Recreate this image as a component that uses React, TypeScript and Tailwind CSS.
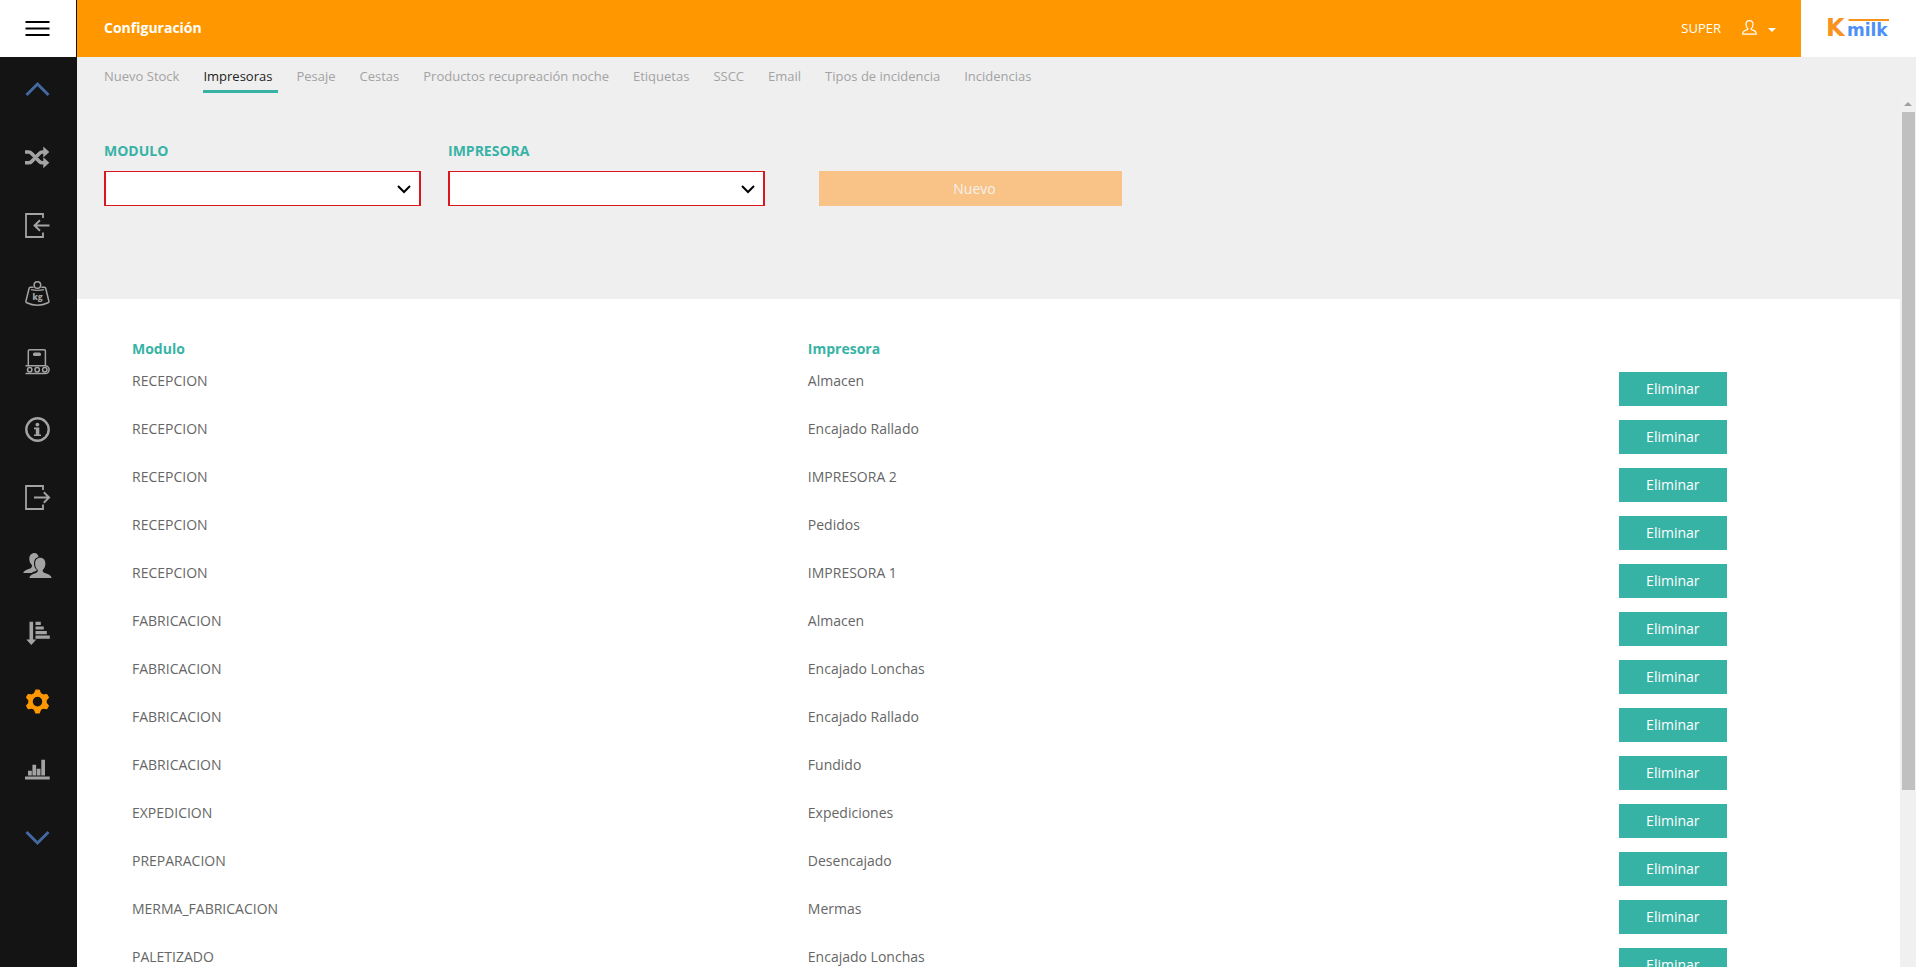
import React, { useState } from 'react';

interface IAssignment {
  modulo: string;
  impresora: string;
}

const tabs = [
  'Nuevo Stock',
  'Impresoras',
  'Pesaje',
  'Cestas',
  'Productos recupreación noche',
  'Etiquetas',
  'SSCC',
  'Email',
  'Tipos de incidencia',
  'Incidencias',
];

const initialAssignments: IAssignment[] = [
  { modulo: 'RECEPCION', impresora: 'Almacen' },
  { modulo: 'RECEPCION', impresora: 'Encajado Rallado' },
  { modulo: 'RECEPCION', impresora: 'IMPRESORA 2' },
  { modulo: 'RECEPCION', impresora: 'Pedidos' },
  { modulo: 'RECEPCION', impresora: 'IMPRESORA 1' },
  { modulo: 'FABRICACION', impresora: 'Almacen' },
  { modulo: 'FABRICACION', impresora: 'Encajado Lonchas' },
  { modulo: 'FABRICACION', impresora: 'Encajado Rallado' },
  { modulo: 'FABRICACION', impresora: 'Fundido' },
  { modulo: 'EXPEDICION', impresora: 'Expediciones' },
  { modulo: 'PREPARACION', impresora: 'Desencajado' },
  { modulo: 'MERMA_FABRICACION', impresora: 'Mermas' },
  { modulo: 'PALETIZADO', impresora: 'Encajado Lonchas' },
];

const Icon: React.FC<{ children: React.ReactNode; className?: string }> = ({
  children,
  className = 'text-[#a3a3a3]',
}) => (
  <svg viewBox="0 0 25 25" className={`size-[25px] overflow-visible ${className}`} fill="none" aria-hidden="true">
    {children}
  </svg>
);

const menu = [
  {
    label: 'Subir',
    icon: (
      <Icon className="text-[#4468a0]">
        <path d="M1.500 18 12.500 7l11 11" stroke="currentColor" strokeWidth="3" />
      </Icon>
    ),
  },
  {
    label: 'Movimientos',
    icon: (
      <Icon>
        <path
          d="M0 7h3.500c1.600 0 2.400.7 3.400 1.800l7.200 7.400c1 1.100 1.800 1.600 3.400 1.600H19M0 17.800h3.500c1.600 0 2.400-.5 3.400-1.600l7.200-7.400C15.100 7.700 15.900 7 17.500 7H19"
          stroke="currentColor"
          strokeWidth="3.600"
        />
        <path d="M18.300 1.500 24.300 7l-6 5.500ZM18.300 12.300l6 5.500-6 5.500Z" fill="currentColor" />
      </Icon>
    ),
  },
  {
    label: 'Entradas',
    icon: (
      <Icon>
        <path d="M18 5V1H1v23h17v-4.500" stroke="currentColor" strokeWidth="1.800" />
        <path d="M24.500 12.500H9.500M15 7.300l-5.500 5.200 5.500 5.200" stroke="currentColor" strokeWidth="1.900" />
      </Icon>
    ),
  },
  {
    label: 'Pesaje',
    icon: (
      <Icon>
        <g stroke="currentColor" strokeWidth="1.500">
          <circle cx="12.400" cy="4" r="3.300" />
          <path d="M8.500 6.300H5.300c-.7 0-1 .3-1.200 1L.9 20.200c-.2.800.1 1.200.8 1.500 6.500 3 14.900 3 21.400 0 .7-.3 1-.7.8-1.500L20.700 7.300c-.2-.7-.5-1-1.200-1h-3.200" />
          <path d="M6 8.700c4 .9 9 .9 13 0" strokeWidth="1.200" />
        </g>
        <text
          x="12.500"
          y="18.500"
          textAnchor="middle"
          fill="currentColor"
          className="font-['Open_Sans'] text-[8px] font-extrabold"
        >
          kg
        </text>
      </Icon>
    ),
  },
  {
    label: 'Fabricación',
    icon: (
      <Icon>
        <g stroke="currentColor" strokeWidth="1.500">
          <path d="M3.300 16.500V2c0-.8.400-1.200 1.200-1.200h14.700c.8 0 1.200.4 1.200 1.200v14.500" />
          <path d="M.5 16.800h19.700a3.900 3.900 0 0 1 0 7.800H.5" />
          <circle cx="4.700" cy="20.700" r="2.200" />
          <circle cx="12.200" cy="20.700" r="2.200" />
          <circle cx="19.800" cy="20.700" r="2.200" />
        </g>
        <rect x="8" y="3.600" width="8" height="3.400" rx="1.500" fill="currentColor" />
      </Icon>
    ),
  },
  {
    label: 'Información',
    icon: (
      <Icon>
        <circle cx="12.500" cy="12.500" r="11.200" stroke="currentColor" strokeWidth="2.400" />
        <circle cx="12.400" cy="7.600" r="1.900" fill="currentColor" />
        <path d="M9 10.600h5.300v6.800H16v1.700H9v-1.700h1.800v-5.100H9Z" fill="currentColor" />
      </Icon>
    ),
  },
  {
    label: 'Salidas',
    icon: (
      <Icon>
        <path d="M18 5V1H1v23h17v-4.500" stroke="currentColor" strokeWidth="1.800" />
        <path d="M9 12.500h15M18.800 7.300l5.300 5.200-5.300 5.200" stroke="currentColor" strokeWidth="1.900" />
      </Icon>
    ),
  },
  {
    label: 'Usuarios',
    icon: (
      <Icon>
        <path
          d="M9.500 0C6.500 0 4.300 2.200 4.300 5.800c0 2.600 1 5 2.600 6.200.4 2-.4 3-2.500 3.800C1.300 16.900-1.200 17.700-1.800 20h8.300c1.300-1 3.300-1.700 4.900-2.300.3-.2.400-.5.200-.9C9.500 14.800 9 12.500 9 10.200c0-3.300 1.600-5.600 4.600-6.200C13 1.500 11.600 0 9.500 0Z"
          fill="currentColor"
        />
        <path
          d="M15.200 4.700c-3.200 0-5.100 2.300-5.100 5.700 0 2.700 1 5.200 2.700 6.500.3 1.700-.6 2.500-2.600 3.300-3 1.100-5.400 2-5.900 4.800h22.400c-.6-2.800-3.200-3.700-6.200-4.800-2-.8-3.200-1.600-2.800-3.300 1.700-1.300 2.700-3.800 2.700-6.500 0-3.400-2-5.700-5.200-5.700Z"
          fill="currentColor"
        />
      </Icon>
    ),
  },
  {
    label: 'Ordenar',
    icon: (
      <Icon>
        <path
          d="M4.500.7h3.600v17.900h3.200L6.300 24l-5-5.400h3.200ZM10.500.7h5.300V4h-5.300ZM10.500 5.400h8.300v3.200h-8.300ZM10.500 9.900h11.300v3.300H10.500ZM10.500 14.500h14.300v3.200H10.500Z"
          fill="currentColor"
        />
      </Icon>
    ),
  },
  {
    label: 'Configuración',
    icon: (
      <Icon className="text-[#ff9800]">
        <path
          fillRule="evenodd"
          clipRule="evenodd"
          d="M10.800 1.200h3.400l1.300 3.400 2.600 1.500 3.600-.6 1.700 2.900-2.300 2.700v3l2.300 2.700-1.700 2.900-3.600-.6-2.600 1.500-1.300 3.400h-3.400l-1.300-3.400-2.600-1.500-3.600.6-1.700-2.900 2.300-2.700v-3L1.600 8.400l1.700-2.900 3.600.6 2.600-1.500ZM12.500 7.200a5.400 5.400 0 1 0 0 10.800 5.400 5.400 0 0 0 0-10.800Z"
          fill="currentColor"
          stroke="currentColor"
          strokeWidth="1.200"
          strokeLinejoin="round"
        />
      </Icon>
    ),
  },
  {
    label: 'Estadísticas',
    icon: (
      <Icon>
        <path
          d="M3 13.700h3.800v4.700H3ZM7.400 7.700h3.700v10.700H7.400ZM11.700 11.700h3.800v6.700h-3.800ZM16.300 2.700H20v15.700h-3.700ZM0 19.600h24.700v2.800H0Z"
          fill="currentColor"
        />
      </Icon>
    ),
  },
  {
    label: 'Bajar',
    icon: (
      <Icon className="text-[#4468a0]">
        <path d="m1.500 7 11 11 11-11" stroke="currentColor" strokeWidth="3" />
      </Icon>
    ),
  },
];

const Sidebar: React.FC = () => (
  <aside className="flex w-[77px] shrink-0 flex-col bg-[#141414]">
    <button
      aria-label="Menú"
      className="mr-px flex h-[57px] shrink-0 items-center justify-center bg-white pr-[2px] pb-[2px]"
    >
      <svg viewBox="0 0 25 16" className="h-4 w-[25px]" aria-hidden="true">
        <path d="M.5 2h24M.5 8.500h24M.5 15h24" stroke="#000" strokeWidth="2" />
      </svg>
    </button>
    <nav className="flex flex-col">
      {menu.map((item) => (
        <button
          key={item.label}
          aria-label={item.label}
          className="flex h-[68px] shrink-0 items-center justify-center pr-[2px] pb-[3px]"
        >
          {item.icon}
        </button>
      ))}
    </nav>
  </aside>
);

const Logo: React.FC = () => (
  <a href="#" aria-label="Kmilk" className="flex w-[115px] items-center justify-center bg-white">
    <svg viewBox="0 0 61 19" className="h-[19px] w-[61px] overflow-visible">
      <text x="-2" y="17" fill="#f7931e" className="font-['DejaVu_Sans'] text-[24px] font-bold">
        K
      </text>
      <path d="M20.500 1H61" stroke="#f7931e" strokeWidth="2.200" />
      <text x="19" y="17" fill="#4d8ff7" className="font-['DejaVu_Sans'] text-[17px] font-bold">
        milk
      </text>
    </svg>
  </a>
);

const Header: React.FC = () => (
  <header className="flex h-[57px] shrink-0 bg-[#ff9800] text-white">
    <h1 className="flex flex-1 items-center pb-px pl-[27px] text-sm font-bold">Configuración</h1>
    <button className="flex items-center pr-[25px] pb-px text-[13px]">
      SUPER
      <svg viewBox="0 0 15 15" className="mb-px ml-[21px] size-[15px]" fill="none" aria-hidden="true">
        <path
          d="M7.500.7C5.300.7 4 2.300 4 4.600c0 1.900.9 3.500 2 4.300-.2.900-.9 1-2 1.300-1.900.5-3.300 1.300-3.300 4h13.600c0-2.700-1.400-3.500-3.300-4-1.100-.3-1.800-.4-2-1.300 1.100-.8 2-2.400 2-4.300C11 2.300 9.700.7 7.500.7Z"
          stroke="currentColor"
          strokeWidth="1.200"
        />
      </svg>
      <svg viewBox="0 0 8 4" className="mt-1 ml-[11px] h-1 w-2" aria-hidden="true">
        <path d="M0 0h8L4 4Z" fill="currentColor" />
      </svg>
    </button>
    <Logo />
  </header>
);

const SelectField: React.FC<{ id: string; label: string; options: string[] }> = ({ id, label, options }) => {
  const [value, setValue] = useState<string>('');

  return (
    <div className="w-[317px]">
      <label htmlFor={id} className="block pb-[10px] text-sm leading-5 font-bold text-[#37b3a6]">
        {label}
      </label>
      <div className="relative">
        <select
          id={id}
          value={value}
          onChange={(e) => setValue(e.target.value)}
          className="block h-[35px] w-full appearance-none border-x-2 border-y border-[#d8181c] bg-white px-3 text-sm"
        >
          <option value=""></option>
          {options.map((option) => (
            <option key={option}>{option}</option>
          ))}
        </select>
        <svg
          viewBox="0 0 14 9"
          className="pointer-events-none absolute top-[14px] right-[10px] h-[9px] w-[14px]"
          fill="none"
          aria-hidden="true"
        >
          <path d="m1 1 6 6 6-6" stroke="#000" strokeWidth="2" />
        </svg>
      </div>
    </div>
  );
};

const App: React.FC = () => {
  const [activeTab, setActiveTab] = useState<string>('Impresoras');
  const [assignments, setAssignments] = useState<IAssignment[]>(initialAssignments);

  const handleDelete = (index: number) => {
    setAssignments(assignments.filter((_, i) => i !== index));
  };

  return (
    <div className="flex h-screen overflow-hidden bg-white font-['Open_Sans',sans-serif] text-sm text-[#666]">
      <Sidebar />
      <div className="flex min-w-0 flex-1 flex-col">
        <Header />
        <nav className="flex h-[41px] shrink-0 items-start gap-[18px] bg-[#efefef] pt-[9px] pl-[27px] text-[13px]">
          {tabs.map((tab) => (
            <button
              key={tab}
              onClick={() => setActiveTab(tab)}
              className={
                tab === activeTab
                  ? 'h-[27px] border-b-3 border-[#37b3a6] pr-[6px] pb-1 leading-5 text-[#222]'
                  : 'h-[27px] border-b-3 border-transparent pr-[6px] pb-1 leading-5 text-[#a3a3a3]'
              }
            >
              {tab}
            </button>
          ))}
        </nav>
        <div className="flex min-h-0 flex-1">
          <main className="min-w-0 flex-1 overflow-hidden">
            <section className="flex h-[201px] gap-[27px] bg-[#efefef] pt-[43px] pl-[27px]">
              <SelectField id="modulo" label="MODULO" options={['RECEPCION', 'FABRICACION', 'EXPEDICION']} />
              <SelectField id="impresora" label="IMPRESORA" options={['Almacen', 'Pedidos', 'Fundido']} />
              <button className="mt-[30px] ml-[27px] h-[35px] w-[303px] bg-[#f9c287] pl-2 text-sm font-medium text-[#f5f1ec]">
                Nuevo
              </button>
            </section>
            <section className="pt-10 pr-[146px] pl-[55px]">
              <table className="w-full table-fixed text-left">
                <thead>
                  <tr className="h-[33px] align-top leading-5 text-[#37b3a6]">
                    <th className="w-5/12 font-bold">Modulo</th>
                    <th className="w-6/12 font-bold">Impresora</th>
                    <th className="w-1/12"></th>
                  </tr>
                </thead>
                <tbody>
                  {assignments.map((row, index) => (
                    <tr key={index} className="h-12 align-top leading-[18px]">
                      <td>{row.modulo}</td>
                      <td>{row.impresora}</td>
                      <td>
                        <button
                          onClick={() => handleDelete(index)}
                          className="block h-[34px] w-[108px] bg-[#37b3a6] font-medium text-white"
                        >
                          Eliminar
                        </button>
                      </td>
                    </tr>
                  ))}
                </tbody>
              </table>
            </section>
          </main>
          {/* scroll track */}
          <div className="flex w-4 shrink-0 flex-col items-center bg-[#f0f0f0]" aria-hidden="true">
            <svg viewBox="0 0 8 4" className="mt-1 mb-[6px] h-1 w-2">
              <path d="M0 4h8L4 0Z" fill="#a0a0a0" />
            </svg>
            <div className="h-[78%] w-[13px] bg-[#c0c0c0]"></div>
          </div>
        </div>
      </div>
    </div>
  );
};

export default App;
